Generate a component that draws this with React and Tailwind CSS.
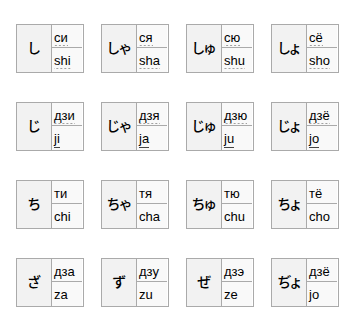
const rows = [
  [
    { kana: 'し', ru: 'си', en: 'shi', ruLine: 'dot', enLine: 'dot' },
    { kana: 'しゃ', ru: 'ся', en: 'sha', ruLine: 'dot', enLine: 'dot' },
    { kana: 'しゅ', ru: 'сю', en: 'shu', ruLine: 'dot', enLine: 'dot' },
    { kana: 'しょ', ru: 'сё', en: 'sho', ruLine: 'dot', enLine: 'dot' },
  ],
  [
    { kana: 'じ', ru: 'дзи', en: 'ji', ruLine: 'dot', enLine: 'solid' },
    { kana: 'じゃ', ru: 'дзя', en: 'ja', ruLine: 'dot', enLine: 'solid' },
    { kana: 'じゅ', ru: 'дзю', en: 'ju', ruLine: 'dot', enLine: 'solid' },
    { kana: 'じょ', ru: 'дзё', en: 'jo', ruLine: 'dot', enLine: 'solid' },
  ],
  [
    { kana: 'ち', ru: 'ти', en: 'chi' },
    { kana: 'ちゃ', ru: 'тя', en: 'cha' },
    { kana: 'ちゅ', ru: 'тю', en: 'chu' },
    { kana: 'ちょ', ru: 'тё', en: 'cho' },
  ],
  [
    { kana: 'ざ', ru: 'дза', en: 'za' },
    { kana: 'ず', ru: 'дзу', en: 'zu' },
    { kana: 'ぜ', ru: 'дзэ', en: 'ze' },
    { kana: 'ぢょ', ru: 'дзё', en: 'jo' },
  ],
]

function Label({ text, line }) {
  // dotted = abbr-style hint, solid = link underline
  if (line === 'dot')
    return (
      <span className="inline-block leading-[15px] pb-[1px] bg-[linear-gradient(to_right,#a0a0a0_50%,transparent_50%)] bg-[length:4px_1px] bg-repeat-x bg-bottom">
        {text}
      </span>
    )
  if (line === 'solid')
    return <span className="inline-block leading-[15px] pb-[1px] border-b border-[#444]">{text}</span>
  return <span className="inline-block leading-[15px]">{text}</span>
}

function Cell({ c }) {
  return (
    <div className="flex w-[68px] h-[49px] border border-[#aaaaaa] text-black">
      <div className="w-[35px] flex items-center justify-center pb-[3px] bg-[#f2f2f2] border-r border-[#aaaaaa] text-[14px] font-medium font-['Noto_Sans_CJK_JP',sans-serif] [font-feature-settings:'palt']">
        {c.kana}
      </div>
      <div className="w-[30px] flex flex-col bg-[#f9f9f9] text-[13px] font-['Liberation_Sans',Arial,sans-serif]">
        <div className="h-[23px] border-b border-[#aaaaaa] pl-[2px] pt-[3px]">
          <Label text={c.ru} line={c.ruLine} />
        </div>
        <div className="h-[23px] pl-[2px] pt-[3px]">
          <Label text={c.en} line={c.enLine} />
        </div>
      </div>
    </div>
  )
}

export default function App() {
  return (
    <div className="w-[362px] h-[324px] bg-white pt-[24px] pl-[16px]">
      <div className="flex flex-col gap-[29px]">
        {rows.map((r, i) => (
          <div key={i} className="flex gap-[17px]">
            {r.map(c => <Cell key={c.kana} c={c} />)}
          </div>
        ))}
      </div>
    </div>
  )
}
